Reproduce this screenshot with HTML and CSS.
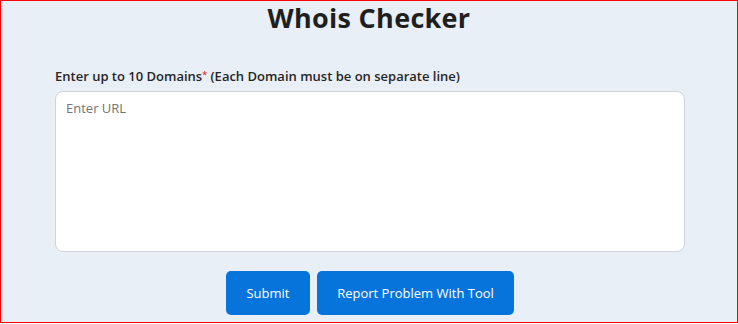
FILE: index.html
```html
<!DOCTYPE html>
<html lang="en">
<head>
<meta charset="utf-8">
<title>Whois Checker</title>
<link rel="stylesheet" href="styles.css">
</head>
<body>
<div class="page">
  <h1 class="title">Whois Checker</h1>
  <form class="form">
    <label class="label" for="domains">Enter up to 10 Domains<span class="req">*</span> (Each Domain must be on separate line)</label>
    <textarea id="domains" class="input" placeholder="Enter URL"></textarea>
    <div class="actions">
      <button type="button" class="btn btn-submit">Submit</button>
      <button type="button" class="btn btn-report">Report Problem With Tool</button>
    </div>
  </form>
</div>
</body>
</html>
```
FILE: styles.css
```css
html, body {
  margin: 0;
  padding: 0;
  background: #ffffff;
}
.page {
  box-sizing: border-box;
  width: 738px;
  height: 323px;
  border: 1px solid #ff0000;
  padding-left: 2px;
  background: #e9eff7;
  font-family: "Open Sans", "Liberation Sans", sans-serif;
  color: #222222;
  overflow: hidden;
}
.title {
  margin: 0 0 0 -2px;
  padding-top: 1px;
  text-align: center;
  font-size: 27px;
  line-height: 32px;
  font-weight: 700;
  letter-spacing: 0.3px;
  color: #1f1f1f;
}
.form {
  width: 630px;
  margin: 32px auto 0;
  display: flex;
  flex-direction: column;
}
.label {
  font-size: 13px;
  line-height: 18px;
  font-weight: 600;
  color: #262626;
  margin-bottom: 6px;
}
.req {
  color: #e03131;
  font-size: 9px;
  vertical-align: 3px;
}
.input {
  box-sizing: border-box;
  width: 630px;
  height: 161px;
  border: 1px solid #cfd4da;
  border-radius: 8px;
  background: #ffffff;
  padding: 7px 10px;
  font-family: "Open Sans", "Liberation Sans", sans-serif;
  font-size: 13px;
  resize: none;
  outline: none;
}
.input::placeholder {
  color: #747474;
}
.actions {
  display: flex;
  justify-content: center;
  gap: 7px;
  margin-top: 19px;
}
.btn {
  height: 44px;
  border: none;
  border-radius: 5px;
  background: #0774dc;
  color: #ffffff;
  font-family: "Open Sans", "Liberation Sans", sans-serif;
  font-size: 13px;
  font-weight: 500;
  padding: 0;
  white-space: nowrap;
  cursor: pointer;
}
.btn-submit {
  width: 84px;
}
.btn-report {
  width: 197px;
}
```
